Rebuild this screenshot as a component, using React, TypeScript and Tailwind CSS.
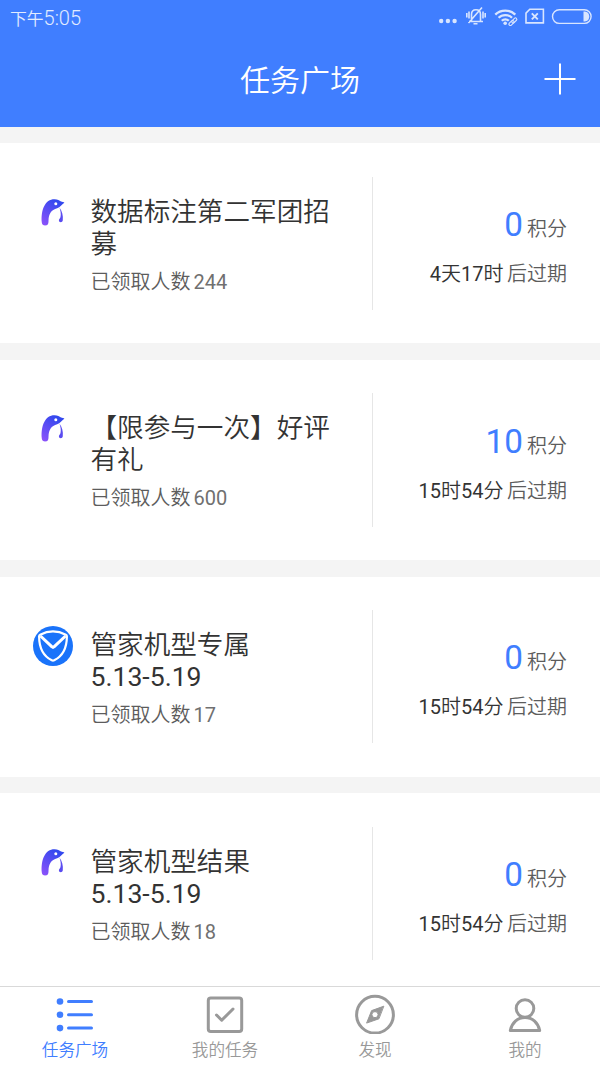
import React from "react";

interface ITask {
    id: number;
    icon: "penguin" | "shield";
    title: string[];
    claimed: number;
    points: number;
    remaining: string;
}

interface TabProps {
    label: string;
    active?: boolean;
    children: React.ReactNode;
}

const tasks: ITask[] = [
    { id: 1, icon: "penguin", title: ["数据标注第二军团招", "募"], claimed: 244, points: 0, remaining: "4天17时" },
    { id: 2, icon: "penguin", title: ["【限参与一次】好评", "有礼"], claimed: 600, points: 10, remaining: "15时54分" },
    { id: 3, icon: "shield", title: ["管家机型专属", "5.13-5.19"], claimed: 17, points: 0, remaining: "15时54分" },
    { id: 4, icon: "penguin", title: ["管家机型结果", "5.13-5.19"], claimed: 18, points: 0, remaining: "15时54分" },
];

const PenguinIcon = () => (
    <svg viewBox="0 0 40 40" className="h-10 w-10">
        <defs>
            <linearGradient id="penguin" x1="0.75" y1="0" x2="0.15" y2="1">
                <stop offset="0.1" stopColor="#3348ee" />
                <stop offset="1" stopColor="#8a52fa" />
            </linearGradient>
        </defs>
        <path
            d="M8.800 29.500C7.800 17 12 6.300 21.500 6.300c3.200 0 5 1.200 6.500 2.100l3 .8c.4.2.4.6 0 .9-2 1.600-3.900 4.300-6.800 5.200-6.100 1.800-8.500 5.400-8.700 12.400 0 3-.5 4.700-3.300 4.700-2 0-3.300-.9-3.400-2.900Z"
            fill="url(#penguin)"
        />
        <path d="M26.400 14.600c2.700 3.400 3.900 8.400 3.400 12.600-.2 2.600-3.900 2.500-3.900.3 0-1.400 1.300-2 1.600-3.400.7-3 0-6.500-1.100-9.500Z" fill="#5a4cf0" />
        <circle cx="22.800" cy="10.700" r="1.500" fill="#fff" />
    </svg>
);

const ShieldIcon = () => (
    <svg viewBox="0 0 40 40" className="h-10 w-10">
        <circle cx="20" cy="20" r="20" fill="#1a73fa" />
        <path
            d="M20 5.400c4.500 0 9 1.300 12.800 3.300.8.400 1.100.9 1.100 1.800C33.800 21 30 30 21.200 34.300c-.8.400-1.600.4-2.400 0C10 30 6.200 21 6.100 10.500c0-.9.300-1.400 1.100-1.800C11 6.700 15.500 5.400 20 5.400Z"
            fill="none"
            stroke="#fff"
            strokeWidth="2.200"
        />
        <path d="M7.500 10 19 20.800c.6.600 1.400.6 2 0L32.500 10" fill="none" stroke="#fff" strokeWidth="3" />
    </svg>
);

const StatusIcons = () => (
    <svg viewBox="0 0 160 24" className="h-6 w-40 overflow-visible opacity-80" fill="none" stroke="#fff" strokeWidth="1.600">
        <g fill="#fff" stroke="none">
            <circle cx="1.200" cy="16" r="2.200" />
            <circle cx="7.900" cy="16" r="2.200" />
            <circle cx="14.600" cy="16" r="2.200" />
        </g>
        {/* muted bell */}
        <path d="M29 16.500h14M31.500 15.800V9.500c0-2.700 1.800-4.700 4.500-4.700s4.500 2 4.500 4.700v6.300M33.500 18.800h4M28.500 18 42 2.500M29 6.500v7M26.800 8v4.500M43 6.500v7M45.200 8v4.500" />
        {/* wifi with link */}
        <path d="M55.300 9.600c5.300-5.400 14.700-5.400 20 0M58.600 12.800c3.700-3.700 9.700-3.700 13.400 0M61.800 15.800c2-2 5-2 7 0" strokeWidth="2.300" />
        <circle cx="65.200" cy="18.200" r="1.800" fill="#fff" stroke="none" />
        <g strokeWidth="1.100">
            <rect x="-3" y="-1.400" width="6" height="2.800" rx="1.400" transform="translate(71.500 18) rotate(-45)" />
            <rect x="-3" y="-1.400" width="6" height="2.800" rx="1.400" transform="translate(74.300 15.400) rotate(-45)" />
        </g>
        {/* no sim */}
        <path d="M89.800 4.300h13.600v13.600H86V8.100Z" strokeWidth="1.600" />
        <path d="m91.800 8.300 6 6m0-6-6 6" strokeWidth="1.900" />
        {/* battery */}
        <rect x="112.500" y="4.800" width="38.600" height="13.600" rx="6.800" strokeWidth="1.400" />
        <path d="M143.500 6.600h1.300c6 0 6 10 0 10h-1.300Z" fill="#fff" stroke="none" />
    </svg>
);

// Digits sit one weight heavier than the characters around them
const MixedText: React.FC<{ text: string }> = ({ text }) => (
    <>
        {text.split(/([\d.-]+)/).map((part, i) =>
            i % 2 ? (
                <span key={i} className="font-normal">
                    {part}
                </span>
            ) : (
                part
            )
        )}
    </>
);

const TaskCard: React.FC<{ task: ITask }> = ({ task }) => {
    return (
        <div className="flex h-[200px] shrink-0 bg-white py-[33.300px] pr-[33px] pl-[33.300px]">
            <div className="w-[57.200px] shrink-0 pt-4">{task.icon === "shield" ? <ShieldIcon /> : <PenguinIcon />}</div>
            <div className="w-[282.500px] shrink-0 border-r border-[#e6e6e6] pt-[19px]">
                <h2 className="text-[26.600px] leading-[32px] font-[350] text-[#333]">
                    {task.title.map((line) => (
                        <span key={line} className="block whitespace-nowrap">
                            <MixedText text={line} />
                        </span>
                    ))}
                </h2>
                <p className="mt-2 flex gap-[3px] text-[20px] leading-7 font-[350] text-[#5c5c5c]">
                    <span>已领取人数</span>
                    <span className="font-normal text-[#707070]">{task.claimed}</span>
                </p>
            </div>
            <div className="flex flex-1 flex-col items-end whitespace-nowrap">
                <p className="mt-[28.500px] flex items-baseline gap-1 leading-10">
                    <span className="text-[33.300px] text-[#407eff]">{task.points}</span>
                    <span className="text-[20px] font-[350] text-[#5c5c5c]">积分</span>
                </p>
                <p className="mt-[11px] flex gap-[3.500px] text-[20px] leading-7 font-[350]">
                    <span className="text-[#333]">
                        <MixedText text={task.remaining} />
                    </span>
                    <span className="text-[#5c5c5c]">后过期</span>
                </p>
            </div>
        </div>
    );
};

const Tab: React.FC<TabProps> = ({ label, active, children }) => {
    return (
        <button className={`flex flex-1 flex-col items-center pt-[7px] ${active ? "text-[#407eff]" : "text-[#999]"}`}>
            <svg viewBox="0 0 40 40" className="h-10 w-10" fill="none" stroke="currentColor" strokeWidth="3" strokeLinecap="round" strokeLinejoin="round">
                {children}
            </svg>
            <span className="mt-[5px] text-[16.600px] leading-6 font-[350]">{label}</span>
        </button>
    );
};

const App = () => {
    return (
        <div className="flex h-[1067px] w-[600px] flex-col overflow-hidden bg-[#f4f4f4] font-[Roboto,'Noto_Sans_CJK_SC',sans-serif]">
            <header className="h-[126.600px] shrink-0 bg-[#407eff] text-white">
                <div className="flex h-[34px] items-center justify-between pl-[10px]">
                    <span className="pt-[2px] text-[16.800px] leading-[34px] font-[350] text-white/85">
                        下午<span className="text-[20px]">5:05</span>
                    </span>
                    <StatusIcons />
                </div>
                <div className="grid h-[92px] grid-cols-[1fr_auto_1fr] items-center px-6">
                    <h1 className="col-start-2 text-[30px] font-[350]">任务广场</h1>
                    <svg viewBox="0 0 32 32" className="mb-[3px] h-8 w-8 justify-self-end" stroke="currentColor" strokeWidth="2">
                        <path d="M0.500 16h31M16 0.500v31" />
                    </svg>
                </div>
            </header>
            <main className="flex min-h-0 flex-1 flex-col gap-[16.700px] overflow-hidden pt-[16.700px]">
                {tasks.map((task) => (
                    <TaskCard key={task.id} task={task} />
                ))}
            </main>
            <nav className="flex h-[81px] shrink-0 border-t border-[#d9d9d9] bg-white">
                <Tab label="任务广场" active>
                    <g fill="currentColor" stroke="none">
                        <circle cx="5" cy="7.500" r="3.300" />
                        <circle cx="5" cy="20.800" r="3.300" />
                        <circle cx="5" cy="34.100" r="3.300" />
                    </g>
                    <path d="M13.500 7.500h23M13.500 20.800h23M13.500 34.100h23" />
                </Tab>
                <Tab label="我的任务">
                    <rect x="3.300" y="4" width="33.400" height="33.400" rx="2.500" />
                    <path d="m11.500 21 5.200 5.200L28 15" />
                </Tab>
                <Tab label="发现">
                    <circle cx="20" cy="20.700" r="18.400" />
                    <path
                        d="M28.500 12.300 16.600 16.600 11.600 29.100 23.600 24.900ZM20 17.500a3.100 3.100 0 1 1 0 6.200 3.100 3.100 0 0 1 0-6.200Z"
                        fill="currentColor"
                        fillRule="evenodd"
                        strokeWidth="1"
                    />
                </Tab>
                <Tab label="我的">
                    <circle cx="20" cy="14.500" r="8.800" />
                    <path d="M5.300 36.500C6.800 29 12.500 23.500 20 23.500s13.200 5.500 14.700 13Z" />
                </Tab>
            </nav>
        </div>
    );
};

export default App;
